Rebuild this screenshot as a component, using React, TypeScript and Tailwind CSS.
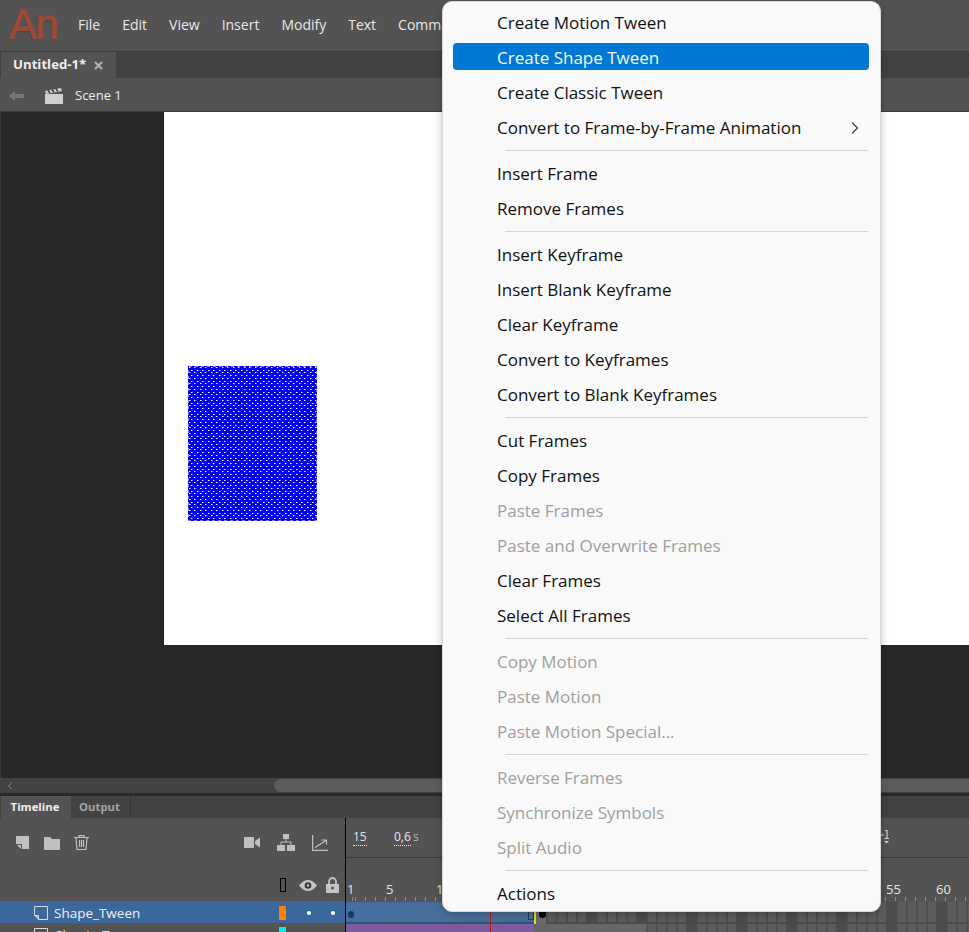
import React from 'react';
import { ChevronRight, ChevronLeft } from 'lucide-react';

const font = 'font-["Open_Sans","Noto_Sans",sans-serif]';

const menuBar = ['File', 'Edit', 'View', 'Insert', 'Modify', 'Text', 'Commands'];

type Row = { label: string; disabled?: boolean; active?: boolean; sub?: boolean };

const menuGroups: Row[][] = [
  [
    { label: 'Create Motion Tween' },
    { label: 'Create Shape Tween', active: true },
    { label: 'Create Classic Tween' },
    { label: 'Convert to Frame-by-Frame Animation', sub: true },
  ],
  [{ label: 'Insert Frame' }, { label: 'Remove Frames' }],
  [
    { label: 'Insert Keyframe' },
    { label: 'Insert Blank Keyframe' },
    { label: 'Clear Keyframe' },
    { label: 'Convert to Keyframes' },
    { label: 'Convert to Blank Keyframes' },
  ],
  [
    { label: 'Cut Frames' },
    { label: 'Copy Frames' },
    { label: 'Paste Frames', disabled: true },
    { label: 'Paste and Overwrite Frames', disabled: true },
    { label: 'Clear Frames' },
    { label: 'Select All Frames' },
  ],
  [
    { label: 'Copy Motion', disabled: true },
    { label: 'Paste Motion', disabled: true },
    { label: 'Paste Motion Special...', disabled: true },
  ],
  [
    { label: 'Reverse Frames', disabled: true },
    { label: 'Synchronize Symbols', disabled: true },
    { label: 'Split Audio', disabled: true },
  ],
  [{ label: 'Actions' }],
];

// dot positions of the fill pattern, one 11px tile
const dots = [
  [1, 1],
  [6, 1],
  [3, 4],
  [9, 4],
  [1, 6],
  [6, 6],
  [3, 9],
  [9, 9],
];

const LayerIcon = () => (
  <svg width="16" height="16" viewBox="0 0 16 16" fill="none" stroke="#d4dbe4" strokeWidth="1" className="shrink-0">
    <path d="M1.5 1.5h13v13h-9l-4-4z" />
    <path d="M1.5 10.5h4v4" fill="#9fb2c9" />
  </svg>
);

const ContextMenu = () => (
  <div className="absolute left-[442px] top-[1px] w-[439px] h-[911px] bg-[#f9f9f9] rounded-[10px] border border-[#d8d8d8] pt-[2.5px] shadow-[0_2px_8px_rgba(0,0,0,0.25)] text-[17px] text-[#111]">
    {menuGroups.map((group, i) => (
      <div key={i}>
        {i > 0 && (
          <div className="h-[11px] flex items-center pl-[62px] pr-[12px]">
            <div className="h-px w-full bg-[#d4d4d4]" />
          </div>
        )}
        {group.map((row) => (
          <div key={row.label} className="h-[35px] pt-[3px] pl-[10px] pr-[11px]">
            <div className={`h-[27px] pl-[44px] pr-[4px] pt-[3px] rounded-[4px] flex items-center justify-between ${row.active ? 'bg-[#0078d4] text-[#f4f9fd]' : row.disabled ? 'text-[#a0a0a0]' : ''}`}>
              <span className="whitespace-nowrap">{row.label}</span>
              {row.sub && <ChevronRight className="text-[#444]" size={20} strokeWidth={1.5} />}
            </div>
          </div>
        ))}
      </div>
    ))}
  </div>
);

const TimelineFrames = () => (
  <div className="flex-1 relative bg-[#535353] overflow-hidden">
    {/* fps and time readouts */}
    <div className="h-[40px] border-b border-[#3c3c3c] flex items-start pl-[7px] pt-[11px] text-[12px] leading-4 text-[#e4e4e4]">
      <div className="w-[41px]">
        <span className="border-b border-dotted border-[#e4e4e4]">15</span>
      </div>
      <div className="w-[19px]">
        <span className="border-b border-dotted border-[#e4e4e4]">0,6</span>
      </div>
      <span className="text-[#b5b5b5]">s</span>
      <svg className="ml-auto mr-[78px]" width="10" height="15" viewBox="0 0 10 15" fill="none" stroke="#d0d0d0" strokeWidth="1.2">
        <path d="M0 6h3M4 1.5h2v8M3 9.5h5" />
        <path d="M3 12h5l-2.5 2.5z" fill="#d0d0d0" stroke="none" />
      </svg>
    </div>

    {/* ruler */}
    <div className="h-[44px] text-[13px] leading-4 text-[#e6e6e6]">
      <div className="h-[39px] pt-[23px] pl-[1px] flex">
        <div className="w-[39px]">1</div>
        <div className="w-[50px]">5</div>
        <div className="w-[450px]">1</div>
        <div className="w-[50px]">55</div>
        <div>60</div>
      </div>
      <div className="h-[4px] bg-[repeating-linear-gradient(90deg,#8c8c8c_0,#8c8c8c_1px,transparent_1px,transparent_10px)] bg-[position:9px_0]" />
    </div>

    {/* shape tween row */}
    <div className="h-[22px] flex">
      <div className="w-[188px] flex items-end justify-between pl-[2px] pb-[2px] bg-[linear-gradient(90deg,#44709f,#4a6d96)] border-b-2 border-[#2f5378]">
        <div className="w-[6px] h-[7px] mb-[2px] rounded-full bg-[#1b3a66]" />
        <div className="w-[6px] h-[11px] border border-[#1b3a66]" />
      </div>
      <div className="w-[12px] flex items-center pl-[3px] bg-[#6a6a6a] border-l-2 border-[#e8d820]">
        <div className="w-[7px] h-[9px] rounded-full bg-black" />
      </div>
      <div className="flex-1 bg-[#5c5c5c] bg-[repeating-linear-gradient(90deg,transparent_0,transparent_40px,#4c4c4c_40px,#4c4c4c_50px),repeating-linear-gradient(90deg,#505050_0,#505050_2px,transparent_2px,transparent_10px)] border-b-2 border-[#4a4a4a]" />
    </div>

    {/* next layer row */}
    <div className="h-[8px] flex">
      <div className="w-[188px] bg-[#7f5a9c]" />
      <div className="w-[112px] bg-[#666666]" />
      <div className="flex-1 bg-[#5c5c5c] bg-[repeating-linear-gradient(90deg,transparent_0,transparent_40px,#4c4c4c_40px,#4c4c4c_50px),repeating-linear-gradient(90deg,#505050_0,#505050_2px,transparent_2px,transparent_10px)]" />
    </div>

    {/* playhead */}
    <div className="absolute left-[144px] top-[84px] bottom-0 w-px bg-[#b31b1b]" />
  </div>
);

const App: React.FC = () => {
  return (
    <div className={`w-[969px] h-[932px] relative overflow-hidden bg-[#282828] flex flex-col ${font}`}>
      {/* Menu bar */}
      <div className="h-[52px] bg-[#535353] flex items-center border-b border-[#3a3a3a]">
        <span className="w-[78px] pl-[9px] pb-[2px] text-[42px] leading-none tracking-[-1.5px] text-[#9c4a38] [-webkit-text-stroke:1px_#9c4a38] [text-shadow:0_1px_1px_#333] font-['Liberation_Sans',sans-serif]">An</span>
        <div className="flex gap-[22px] text-[14px] text-[#e8e8e8] whitespace-nowrap pb-[2px]">
          {menuBar.map((m) => (
            <span key={m}>{m}</span>
          ))}
        </div>
      </div>

      {/* Doc tabs */}
      <div className="h-[26px] bg-[#424242] flex pl-px">
        <div className="w-[115px] bg-[#535353] flex items-center gap-[8px] pl-[12px] text-[13.2px] font-bold text-[#efefef]">
          Untitled-1*
          <svg width="9" height="9" viewBox="0 0 9 9" stroke="#b5b5b5" strokeWidth="2">
            <path d="M1 1l7 7M8 1l-7 7" />
          </svg>
        </div>
      </div>

      {/* Scene bar */}
      <div className="h-[34px] bg-[#535353] flex items-center border-b border-[#3a3a3a] pl-[9px] pt-[2px] text-[13px] text-[#eeeeee]">
        <svg width="16" height="12" viewBox="0 0 16 12" fill="#767676">
          <path d="M0 6l6-5v3h9v4H6v3z" />
        </svg>
        <svg className="ml-[19px]" width="19" height="18" viewBox="0 0 19 18" fill="#cfcfcf">
          <path d="M1 7h18v10H1z" />
          <path d="M1 4l16-3 1 3-16 3z" />
          <path d="M4 3.500l2 2.400M8 2.800l2 2.400M12 2l2 2.400" stroke="#333" strokeWidth="1.400" />
        </svg>
        <span className="ml-[12px]">Scene 1</span>
      </div>

      {/* Stage */}
      <div className="flex-1 pl-[162px] border-l border-[#3a3a3a]">
        <div className="h-[533px] bg-white border-l border-[#222] pt-[254px] pl-[24px]">
          <svg width="129" height="155" className="block" shapeRendering="crispEdges">
            <defs>
              <pattern id="dots" width="11" height="11" patternUnits="userSpaceOnUse">
                <rect width="11" height="11" fill="#0000ee" />
                {dots.map(([x, y]) => (
                  <g key={`${x}-${y}`}>
                    <rect x={x} y={y} width="1" height="1" fill="#ffffff" />
                    <rect x={x + 1} y={y} width="1" height="1" fill="#ffffff" fillOpacity="0.45" />
                  </g>
                ))}
              </pattern>
            </defs>
            <rect width="129" height="155" fill="url(#dots)" />
            <rect x="0.500" y="0.500" width="128" height="154" fill="none" stroke="#b4b4ff" strokeOpacity="0.7" strokeDasharray="3 3" />
          </svg>
        </div>
      </div>

      {/* Horizontal scroll bar */}
      <div className="h-[15px] bg-[#424242] flex items-center pl-[4px]">
        <ChevronLeft size={12} className="text-[#8a8a8a]" />
        <div className="ml-[258px] flex-1 h-[13px] rounded-l-full bg-[#5c5c5c]" />
      </div>

      {/* Timeline tabs */}
      <div className="h-[22px] bg-[#424242] mt-[3px] flex items-stretch text-[11.3px] font-bold pl-px">
        <div className="w-[70px] pr-[2px] bg-[#535353] text-[#f0f0f0] flex items-center justify-center">Timeline</div>
        <div className="w-[60px] pr-[2px] text-[#a5a5a5] flex items-center justify-center border-r border-[#363636]">Output</div>
      </div>

      {/* Timeline body */}
      <div className="h-[114px] flex bg-[#535353]">
        <div className="w-[346px] border-r border-black flex flex-col shrink-0">
          <div className="h-[38px] flex items-center pl-[16px] mt-[6px] text-[#c0c0c0]">
            <svg width="14" height="14" viewBox="0 0 14 14" fill="currentColor">
              <path d="M0 0h13v13H6V8H0z" />
              <path d="M1 9h4v4z" />
            </svg>
            <svg className="ml-[14px]" width="16" height="14" viewBox="0 0 16 14" fill="currentColor">
              <path d="M0 2q0-1 1-1h5l2 2h7q1 0 1 1v9q0 1-1 1H1q-1 0-1-1z" />
            </svg>
            <svg className="ml-[14px]" width="15" height="15" viewBox="0 0 15 15" fill="none" stroke="currentColor" strokeWidth="1.200">
              <path d="M0 2.500h15M5 2.500V.6h5v1.900M2 2.500l1 12h9l1-12M5.500 5v7M7.500 5v7M9.500 5v7" />
            </svg>
            <svg className="ml-[155px]" width="16" height="11" viewBox="0 0 16 11" fill="currentColor">
              <path d="M0 1q0-1 1-1h8q1 0 1 1v9q0 1-1 1H1q-1 0-1-1zM11 4l5-3.500v10L11 7z" />
            </svg>
            <svg className="ml-[17px]" width="18" height="17" viewBox="0 0 18 17" fill="currentColor">
              <path d="M6 0h6v5H6zM0 11h8v6H0zM10 11h8v6h-8z" />
              <path d="M9 5v3M4 11V8h10v3" fill="none" stroke="currentColor" />
            </svg>
            <svg className="ml-[17px]" width="16" height="16" viewBox="0 0 16 16" fill="none" stroke="currentColor" strokeWidth="1.200">
              <path d="M.6 0v15.400H16" />
              <path d="M3 12.500l11-7M9.500 5H14.500V9.500" />
            </svg>
          </div>
          <div className="h-[40px] pt-[8px] pl-[280px] flex items-center">
            <div className="w-[6px] h-[14px] border border-black" />
            <svg className="ml-[13px]" width="18" height="11" viewBox="0 0 18 11">
              <path d="M0 5.500Q9-5.500 18 5.500Q9 16.500 0 5.500z" fill="#c4c4c4" />
              <circle cx="9" cy="5.500" r="3.300" fill="#3a3a3a" />
              <circle cx="9" cy="5.500" r="1.200" fill="#c4c4c4" />
            </svg>
            <svg className="ml-[9px]" width="13" height="16" viewBox="0 0 13 16" fill="#c4c4c4">
              <path d="M3 7V4.500a3.500 3.500 0 0 1 7 0V7" fill="none" stroke="#c4c4c4" strokeWidth="1.800" />
              <path d="M0 7h13v9H0z" />
              <circle cx="6.500" cy="11" r="1.500" fill="#535353" />
            </svg>
          </div>
          <div className="h-[22px] bg-[#3c679b] flex items-center pl-[33px] pt-px text-[13.5px] text-[#eef2f6]">
            <LayerIcon />
            <span className="ml-[5px] w-[225px]">Shape_Tween</span>
            <div className="w-[7px] h-[14px] bg-[#ff8000]" />
            <div className="ml-[21px] w-[4px] h-[4px] rounded-full bg-white" />
            <div className="ml-[20px] w-[4px] h-[4px] rounded-full bg-white" />
          </div>
          <div className="h-[8px] mt-[1px] pl-[33px] pt-[3px] flex items-start overflow-hidden text-[13.5px] leading-5 text-[#d8d8d8]">
            <LayerIcon />
            <span className="ml-[5px] w-[225px] mt-[-2px]">Classic_Tween</span>
            <div className="w-[7px] h-[14px] bg-[#00f0f0]" />
          </div>
        </div>
        <TimelineFrames />
      </div>

      <ContextMenu />
    </div>
  );
};

export default App;
